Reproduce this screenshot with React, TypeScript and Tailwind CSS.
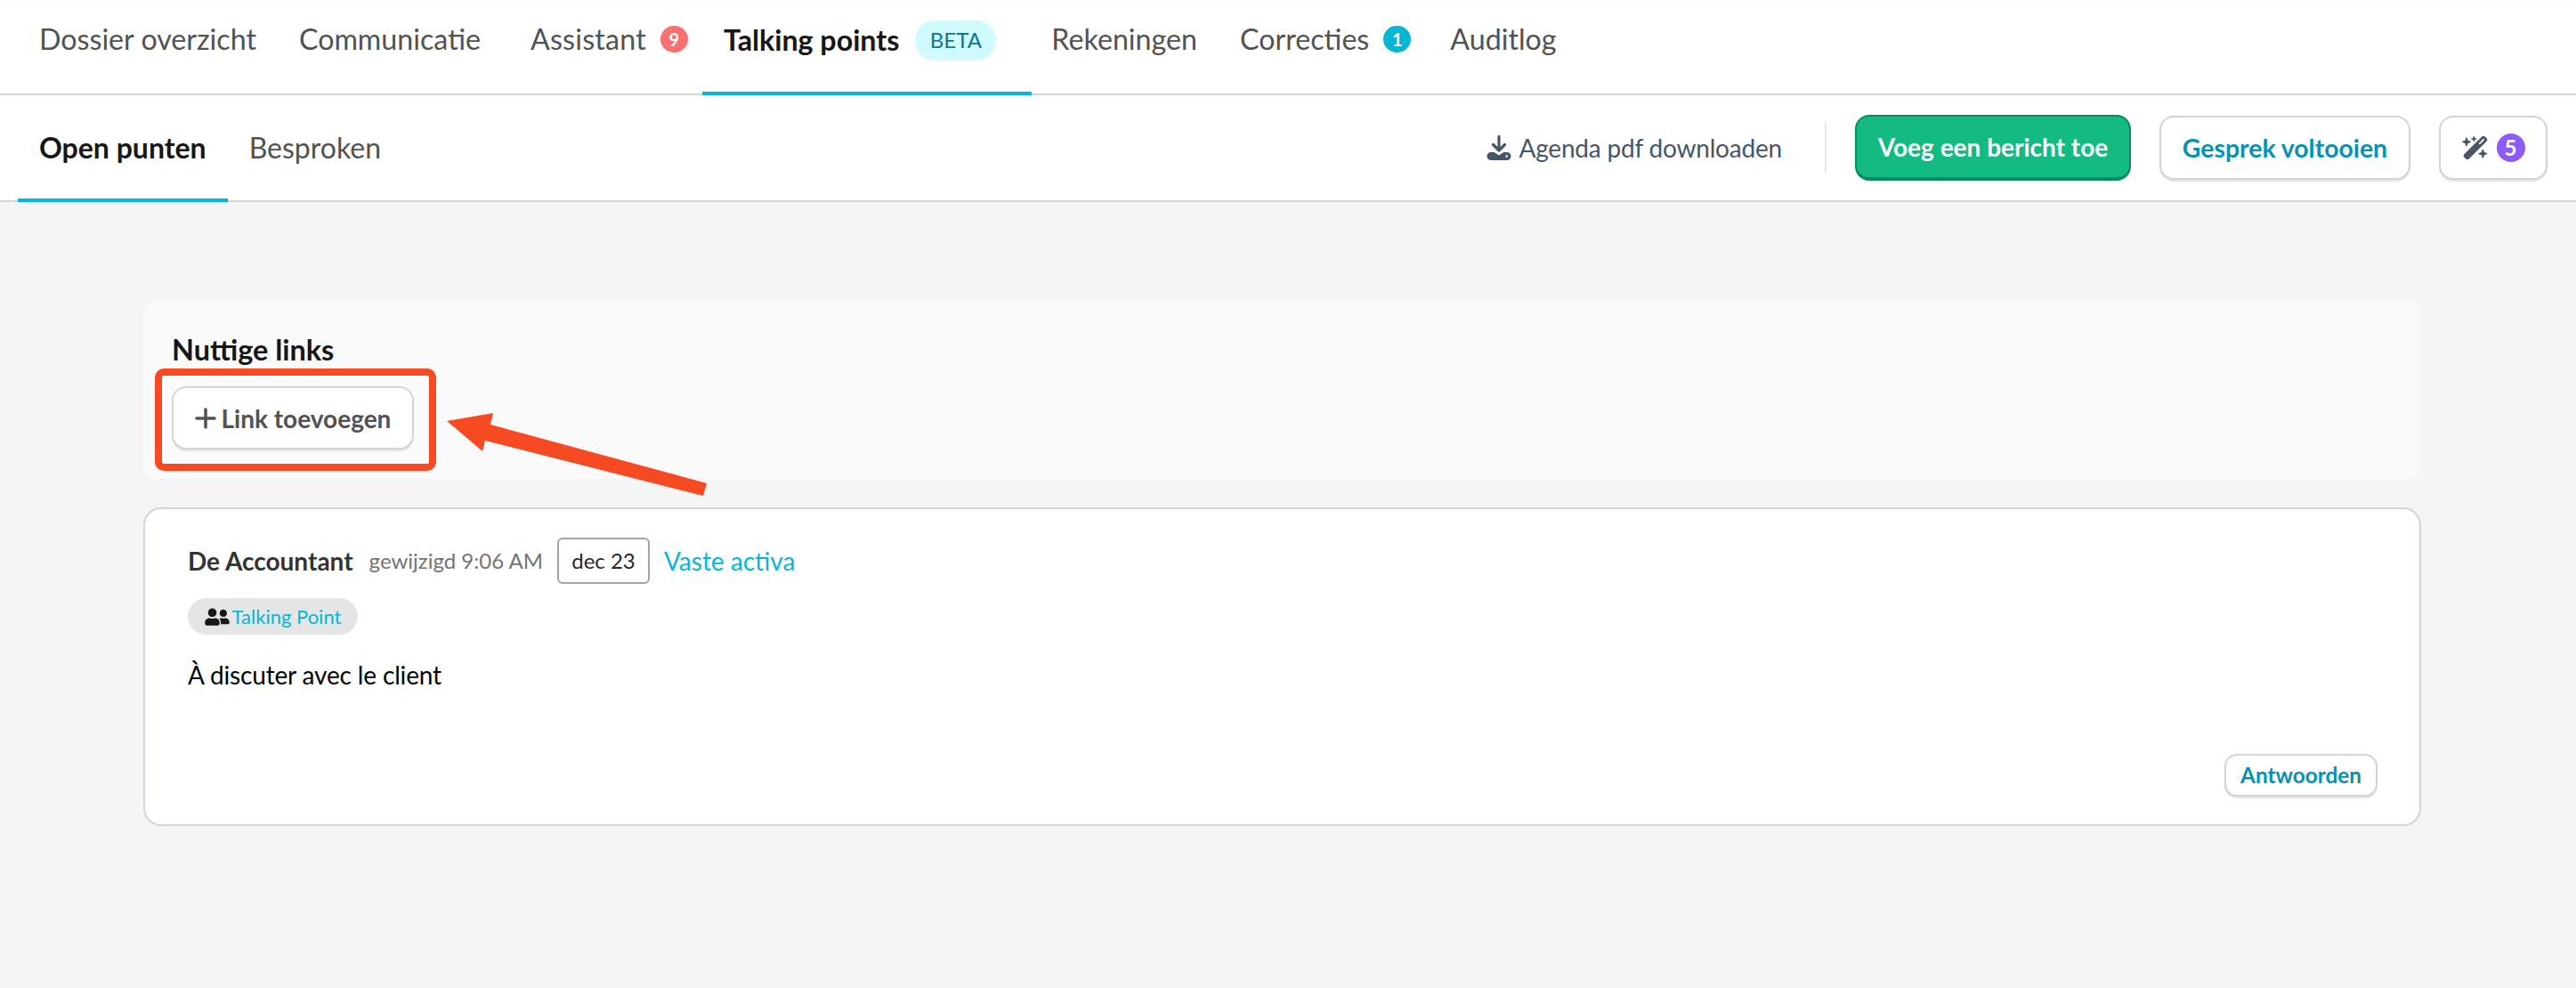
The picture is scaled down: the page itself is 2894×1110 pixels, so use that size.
import { FaUserFriends } from 'react-icons/fa';
import { FaWandMagicSparkles } from 'react-icons/fa6';

const Badge = ({ value, color }: { value: string; color: string }) => (
    <span className={`ml-4 flex h-[30px] w-[31px] items-center justify-center rounded-full text-[20px] font-bold leading-none text-white ${color}`}>
        {value}
    </span>
);

const TopNav = () => (
    <nav className="flex h-[107px] items-stretch border-b-2 border-[#d4d4d4] bg-white pl-5 text-[32.2px] text-[#525252] shadow-[inset_0_5px_4px_-3px_rgba(0,0,0,0.02)]">
        <a className="flex items-center px-6 pb-[17px]">Dossier overzicht</a>
        <a className="flex items-center px-6 pb-[17px]">Communicatie</a>
        <a className="ml-2 flex items-center pb-[17px] pl-6 pr-4 tracking-[0.2px]">
            Assistant
            <Badge value="9" color="bg-[#f87171]" />
        </a>
        <a className="-mb-0.5 flex items-center border-b-4 border-[#06b6d4] pb-[13px] pl-6 pr-10 font-bold text-[#171717]">
            Talking points
            <span className="ml-[18px] flex h-[45px] w-[91px] items-center justify-center rounded-full bg-[#cffafe] text-[24px] font-normal text-[#0e7490]">
                BETA
            </span>
        </a>
        <a className="-ml-0.5 flex items-center px-6 pb-[17px]">Rekeningen</a>
        <a className="flex items-center pb-[17px] pl-6">
            Correcties
            <Badge value="1" color="bg-[#06b6d4]" />
        </a>
        <a className="ml-5 flex items-center px-6 pb-[17px]">Auditlog</a>
    </nav>
);

const DownloadIcon = () => (
    <svg width="28" height="28" viewBox="0 0 28 28" fill="#475569">
        <path d="M14 1.5v15M7.5 10.5l6.5 6.5 6.5-6.5" fill="none" stroke="#475569" strokeWidth="3.2" strokeLinecap="round" strokeLinejoin="round" />
        <path d="M5 19h3.6l5.4 3.6 5.4-3.6H23a4.5 4.5 0 0 1 0 9H5a4.5 4.5 0 0 1 0-9z" />
        <circle cx="22.7" cy="23.5" r="1.3" fill="#ffffff" />
    </svg>
);

const SubBar = () => (
    <div className="flex h-[120px] items-stretch justify-between border-b-2 border-[#d4d4d4] bg-white pl-5 pr-8 text-[32px]">
        <div className="flex items-stretch">
            <a className="-mb-0.5 flex items-center border-b-4 border-[#06b6d4] px-6 pt-0.5 font-bold text-[#171717]">Open punten</a>
            <a className="flex items-center px-6 text-[#525252]">Besproken</a>
        </div>
        <div className="flex items-center">
            <a className="flex items-center gap-2 text-[28px] tracking-[-0.2px] text-[#475569]">
                <DownloadIcon />
                Agenda pdf downloaden
            </a>
            <span className="ml-[48px] h-[56px] w-0.5 bg-[#e5e5e5]" />
            <button className="ml-8 flex h-[74px] w-[310px] items-center justify-center rounded-[16px] border-2 border-b-4 border-[#0a8a60] bg-[#13ba82] text-[28px] font-bold text-white">
                Voeg een bericht toe
            </button>
            <button className="ml-8 flex h-[72px] w-[282px] items-center justify-center rounded-[16px] border-2 border-[#d4d4d4] bg-white text-[28.4px] font-bold text-[#0891b2] shadow-[0_2px_0_#e5e5e5]">
                Gesprek voltooien
            </button>
            <button className="ml-8 flex h-[72px] w-[122px] items-center justify-center gap-[9px] rounded-[16px] border-2 border-[#d4d4d4] bg-white shadow-[0_2px_0_#e5e5e5]">
                <FaWandMagicSparkles className="h-[30px] w-[30px] text-[#475569]" />
                <span className="flex h-8 w-8 items-center justify-center rounded-full bg-[#8b5cf6] text-[24px] font-bold leading-none text-white">5</span>
            </button>
        </div>
    </div>
);

const LinksPanel = () => (
    <section className="relative h-[200px] rounded-[16px] bg-[#fafafa] px-8 pt-[36px]">
        <h2 className="text-[32.4px] font-bold leading-[38px] text-[#171717]">Nuttige links</h2>
        <button className="mt-[22px] flex h-[71px] w-[272px] items-center justify-center gap-[6px] rounded-[16px] border-2 border-[#d4d4d4] bg-white text-[28px] font-bold text-[#525252] shadow-[0_2px_0_#e5e5e5]">
            <svg width="24" height="24" viewBox="0 0 24 24" stroke="#525252" strokeWidth="3.5" strokeLinecap="round">
                <path d="M12 2v20M2 12h20" />
            </svg>
            Link toevoegen
        </button>
    </section>
);

const MessageCard = () => (
    <article className="mt-8 flex h-[358px] flex-col rounded-[20px] border-2 border-[#d1d5db] bg-white px-[48px] pt-[32px]">
        <div className="flex h-[52px] items-center">
            <span className="text-[28px] font-bold text-[#333333]">De Accountant</span>
            <span className="ml-[18px] text-[24px] text-[#737373]">gewijzigd 9:06 AM</span>
            <span className="ml-4 flex h-[52px] w-[104px] items-center justify-center rounded-md border-2 border-[#a3a3a3] text-[24px] text-[#262626]">dec 23</span>
            <span className="ml-4 text-[28px] text-[#06b6d4]">Vaste activa</span>
        </div>
        <div className="mt-4 flex h-[41px] w-[191px] items-center justify-center gap-[3px] rounded-full bg-[#e5e5e5] text-[22px] text-[#06b6d4]">
            <FaUserFriends className="h-[22px] w-[28px] text-[#171717]" />
            Talking Point
        </div>
        <p className="mt-[28px] text-[28px] leading-[34px] tracking-[-0.15px] text-black">À discuter avec le client</p>
        <div className="mt-auto flex justify-end pb-[31px]">
            <button className="-mr-px flex h-[48px] w-[172px] items-center justify-center rounded-[14px] border-2 border-[#d4d4d4] bg-white text-[24.3px] font-bold text-[#0891b2] shadow-[0_2px_0_#e5e5e5]">
                Antwoorden
            </button>
        </div>
    </article>
);

export default function App() {
    return (
        <div className="relative h-[1110px] w-full overflow-hidden bg-[#f5f5f5] font-['Lato','Noto_Sans',sans-serif]">
            <TopNav />
            <SubBar />
            <main className="pl-[161px] pr-[174px] pt-[111px]">
                <LinksPanel />
                <MessageCard />
            </main>

            {/* annotation drawn over the screenshot */}
            <div className="absolute left-[174px] top-[414px] h-[115px] w-[316px] rounded-[10px] border-[8px] border-[#f64a23]" />
            <svg className="absolute left-[500px] top-[460px]" width="300" height="100" viewBox="500 460 300 100">
                <polygon fill="#f64a23" points="502,473 554,464 551,477 794,543 790,557 545,495 542,507" />
            </svg>
        </div>
    );
}
